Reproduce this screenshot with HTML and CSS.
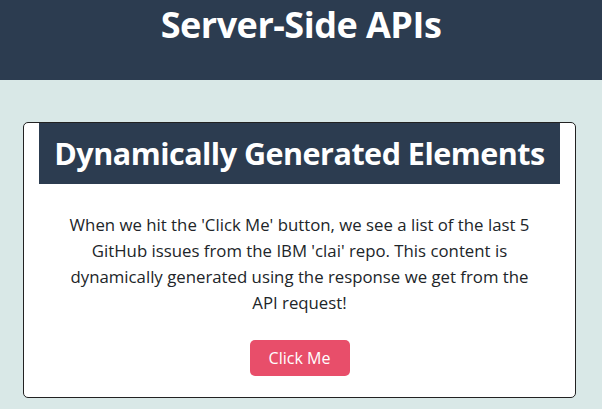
FILE: index.html
```html
<!DOCTYPE html>
<html lang="en">
<head>
<meta charset="utf-8">
<title>Server-Side APIs</title>
<link rel="stylesheet" href="styles.css">
</head>
<body>
<header class="page-header">
  <h1 class="page-title">Server-Side APIs</h1>
</header>
<main class="page-main">
  <section class="card">
    <h2 class="card-title">Dynamically Generated Elements</h2>
    <p class="card-text">When we hit the 'Click Me' button, we see a list of the last 5 GitHub issues from the IBM 'clai' repo. This content is dynamically generated using the response we get from the API request!</p>
    <div class="card-actions">
      <button class="btn" type="button">Click Me</button>
    </div>
  </section>
</main>
</body>
</html>
```
FILE: styles.css
```css
* { box-sizing: border-box; }
body {
  margin: 0;
  background: #d9e8e7;
  font-family: "Open Sans", "Noto Sans", sans-serif;
  color: #212529;
}
.page-header {
  background: #2c3c50;
  height: 80px;
  text-align: center;
}
.page-title {
  margin: 0;
  color: #fff;
  font-size: 36px;
  font-weight: 700;
  line-height: 49px;
  letter-spacing: -0.5px;
}
.page-main {
  padding: 42px 26px 0 23px;
}
.card {
  background: #fff;
  border: 1px solid #222;
  border-radius: 5px;
  padding: 0 15px 21px;
  text-align: center;
}
.card-title {
  margin: 0;
  background: #2c3c50;
  color: #fff;
  height: 61px;
  line-height: 61px;
  font-size: 30.5px;
  font-weight: 700;
  letter-spacing: -0.5px;
}
.card-text {
  margin: 28px 0 0;
  padding: 0 25px;
  font-size: 16.8px;
  line-height: 26px;
}
.card-actions {
  margin-top: 24px;
  display: flex;
  justify-content: center;
}
.btn {
  width: 100px;
  height: 36px;
  border: 0;
  border-radius: 5px;
  background: #e84e6a;
  color: #fff;
  font-family: inherit;
  font-size: 16px;
}
```
